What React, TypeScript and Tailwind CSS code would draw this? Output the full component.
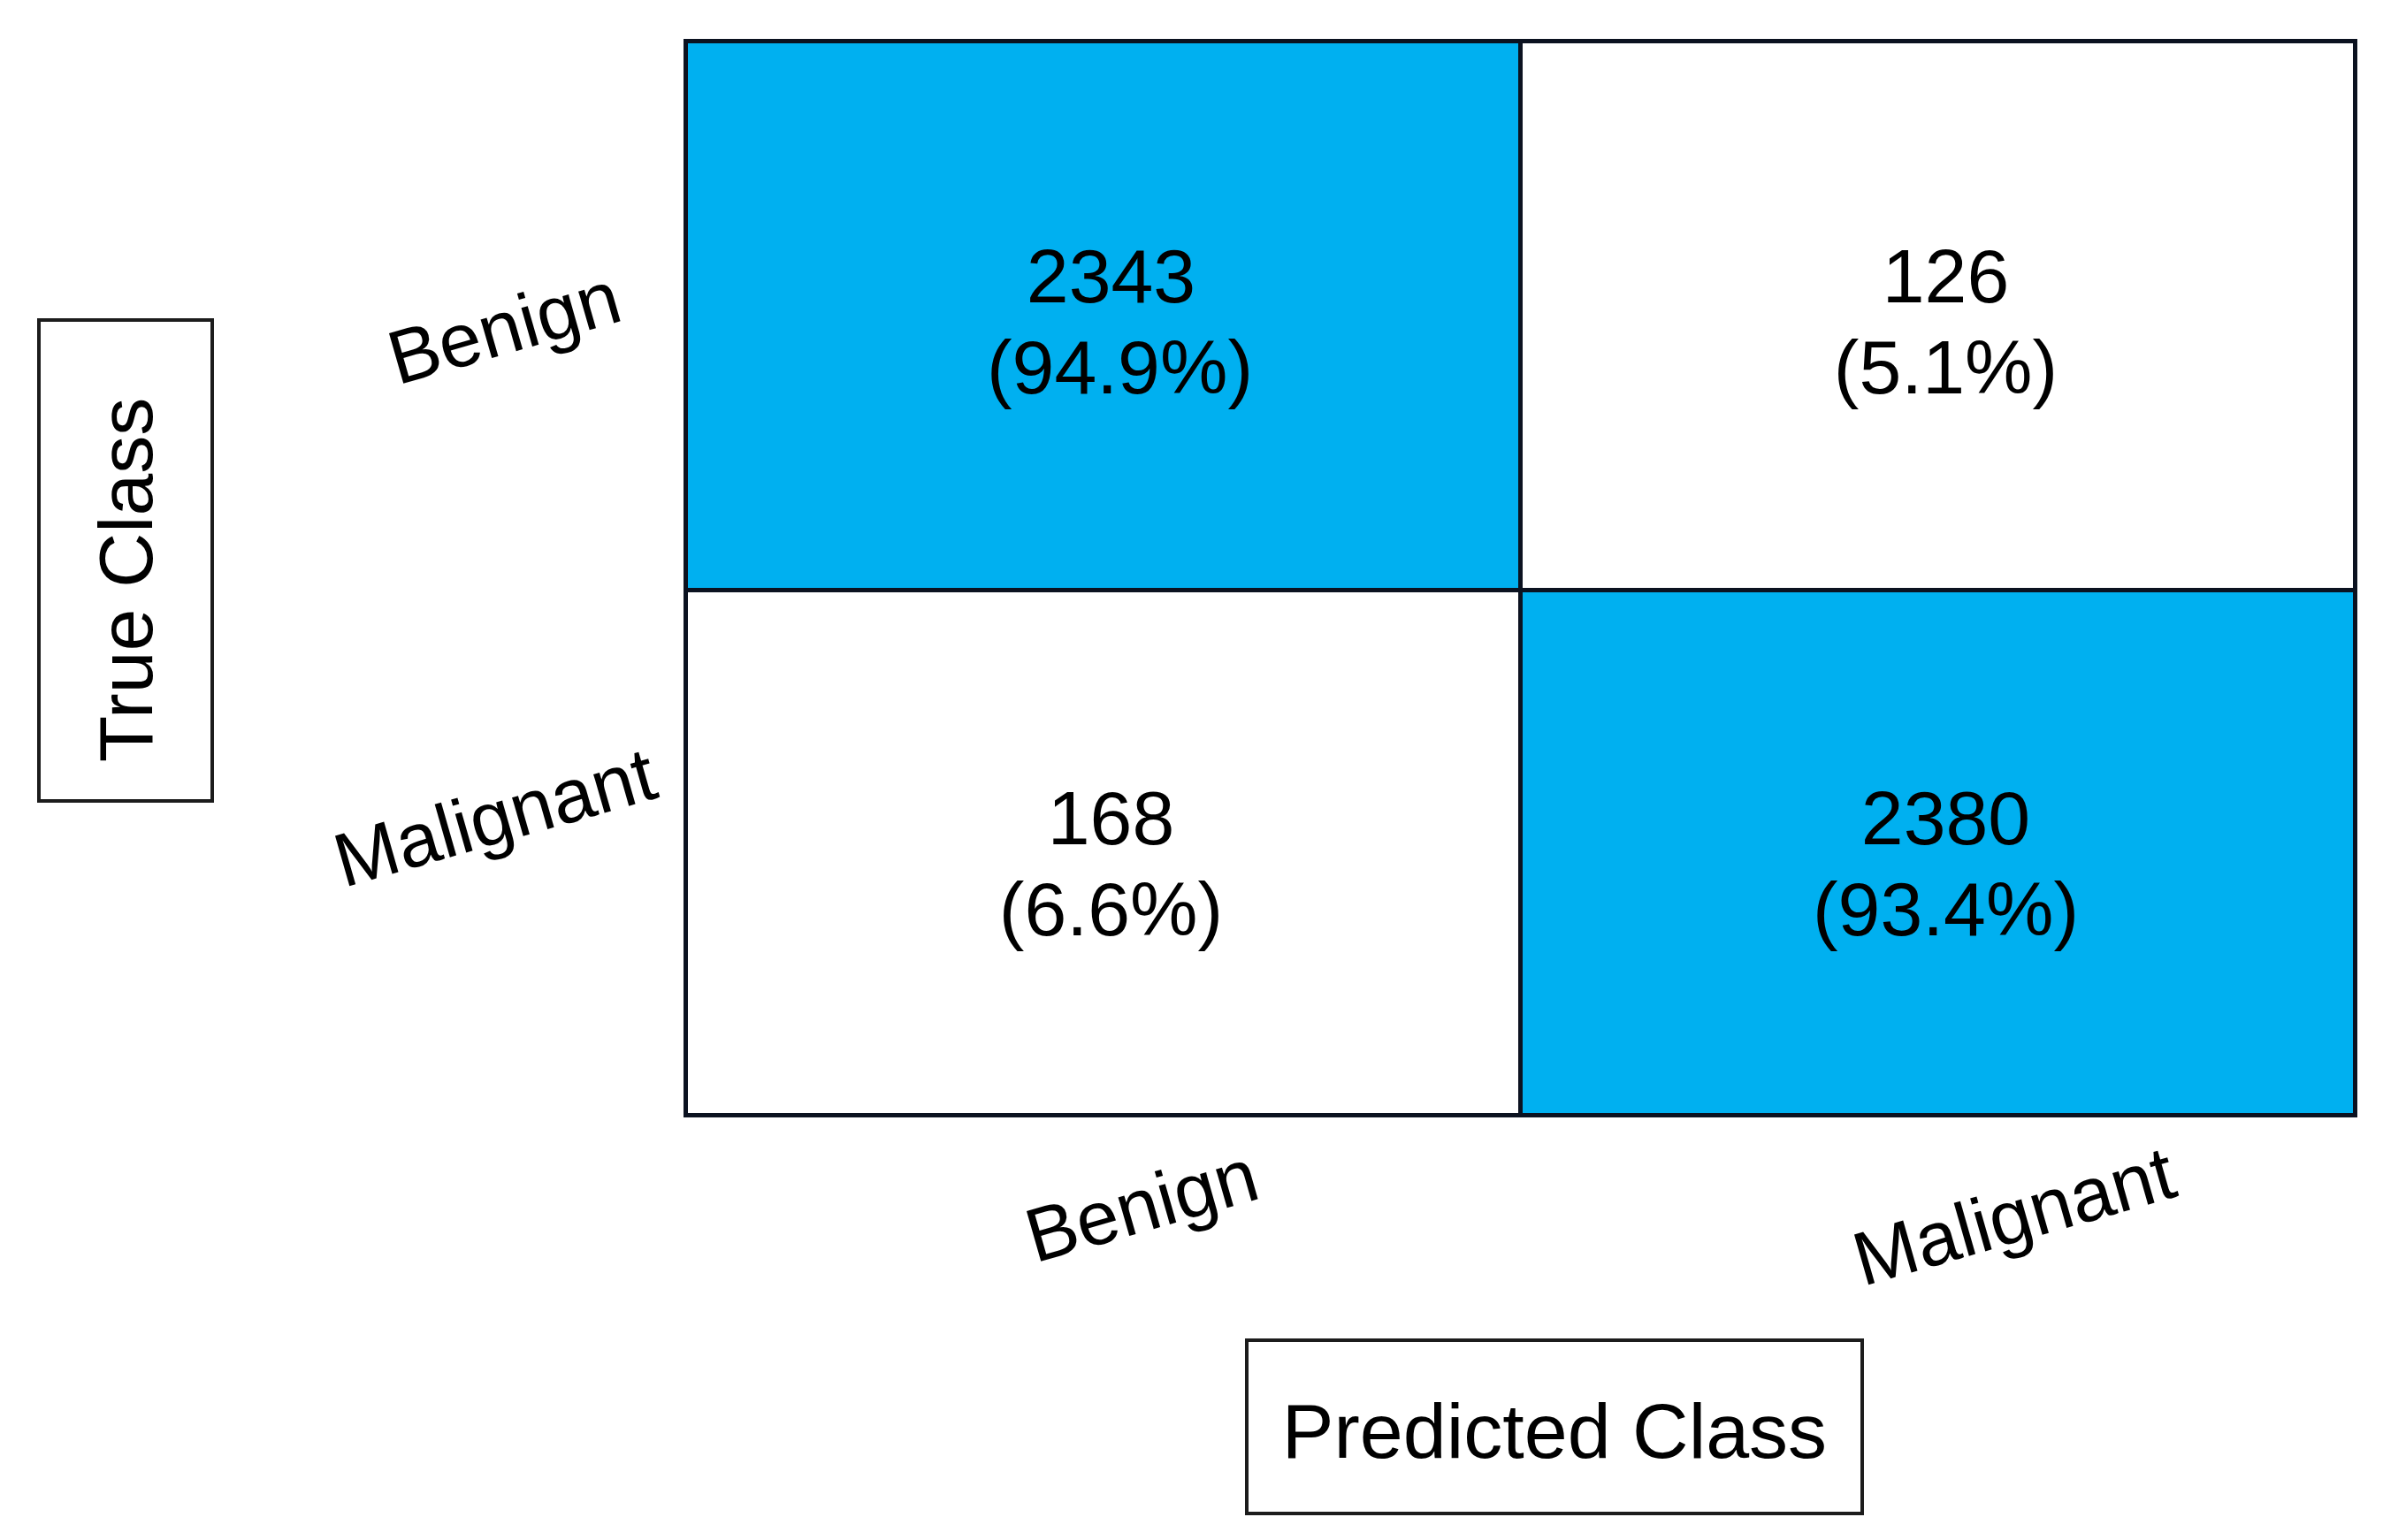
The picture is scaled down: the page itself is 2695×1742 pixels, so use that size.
const cells = [
  { count: "2343", pct: "(94.9%)", hit: true, top: true, nudge: true },
  { count: "126", pct: "(5.1%)", hit: false, top: true, nudge: false },
  { count: "168", pct: "(6.6%)", hit: false, top: false, nudge: false },
  { count: "2380", pct: "(93.4%)", hit: true, top: false, nudge: false },
];

export default function App() {
  return (
    <div className="w-[2695px] h-[1742px] bg-white text-black font-['Liberation_Sans',Arial,sans-serif] flex flex-col overflow-hidden">
      <div className="flex pt-[44px]">
        {/* y axis title + row labels */}
        <div className="w-[773px] shrink-0 flex">
          <div className="ml-[42px] mt-[316px] w-[200px] h-[548px] border-[4px] border-[#1c1c1c] flex items-center justify-center pt-[44px]">
            <span className="shrink-0 -rotate-90 whitespace-nowrap text-[86px] leading-none">True Class</span>
          </div>
          <div className="flex-1 flex flex-col">
            <div className="h-[623px] flex items-center justify-center">
              <span className="shrink-0 whitespace-nowrap text-[86px] leading-none translate-x-[62px] translate-y-[14px] -rotate-[16deg]">
                Benign
              </span>
            </div>
            <div className="h-[597px] flex items-center justify-center">
              <span className="shrink-0 whitespace-nowrap text-[86px] leading-none translate-x-[52px] -translate-y-[42px] -rotate-[16deg]">
                Malignant
              </span>
            </div>
          </div>
        </div>

        {/* confusion matrix */}
        <div className="grid grid-cols-[939px_939px] grid-rows-[616px_589px] gap-[5px] p-[5px] bg-[#0b1220]">
          {cells.map((c) => (
            <div
              key={c.count}
              className={`flex flex-col items-center justify-center pl-[18px] text-[86px] leading-[103px] ${
                c.hit ? "bg-[#00b0f0]" : "bg-white"
              } ${c.top ? "pt-[13px]" : "pt-[25px]"}`}
            >
              <span>{c.count}</span>
              <span className={c.nudge ? "ml-[20px]" : ""}>{c.pct}</span>
            </div>
          ))}
        </div>
      </div>

      {/* column labels */}
      <div className="flex h-[250px] pl-[773px]">
        <div className="w-[947px] flex justify-center items-start">
          <span className="shrink-0 whitespace-nowrap text-[86px] leading-none translate-x-[44px] translate-y-[56px] -rotate-[16deg]">
            Benign
          </span>
        </div>
        <div className="w-[946px] flex justify-center items-start">
          <span className="shrink-0 whitespace-nowrap text-[86px] leading-none translate-x-[84px] translate-y-[68px] -rotate-[16deg]">
            Malignant
          </span>
        </div>
      </div>

      {/* x axis title */}
      <div className="ml-[1408px] w-[700px] h-[200px] border-[4px] border-[#1c1c1c] flex items-center justify-center pt-[10px]">
        <span className="whitespace-nowrap text-[88px] leading-none">Predicted Class</span>
      </div>
    </div>
  );
}
